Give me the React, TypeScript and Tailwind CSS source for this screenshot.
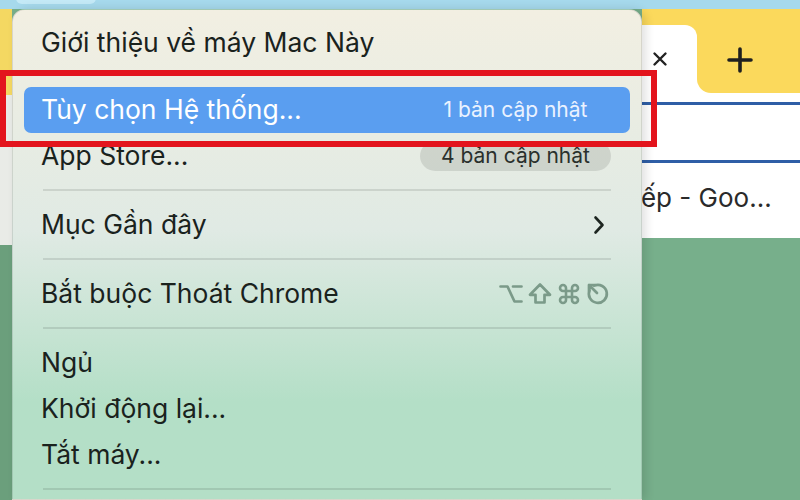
import { Command } from 'lucide-react';

const font = { fontFamily: 'Inter, "Noto Sans", sans-serif' };

function Row({ label, right, active }: { label: string; right?: React.ReactNode; active?: boolean }) {
  return (
    <div
      className={
        'mx-[11px] h-[46px] flex items-center justify-between rounded-[7px] pl-[17px] pr-[19px] text-[26.5px] ' +
        (active ? 'bg-[#5a9ef0] text-white' : 'text-[#1a221d]')
      }
    >
      <span>{label}</span>
      {right}
    </div>
  );
}

function Sep({ h = 'h-[23px]', top = 'pt-[10px]' }: { h?: string; top?: string }) {
  return (
    <div className={h + ' ' + top + ' flex flex-col justify-start px-[30px]'}>
      <div className="h-[2px] bg-black/10" />
    </div>
  );
}

function Badge({ text, active }: { text: string; active?: boolean }) {
  return (
    <div
      className={
        'h-[30px] w-[191px] rounded-full flex items-center justify-center text-[21px] ' +
        (active ? 'text-[#eaf2ff]' : 'bg-black/10 text-[#2a302c]')
      }
    >
      {text}
    </div>
  );
}

function Shortcut() {
  const s = { fill: 'none', stroke: '#7b9a89', strokeWidth: 2.7, strokeLinecap: 'round' as const, strokeLinejoin: 'round' as const };
  return (
    <div className="flex items-center gap-[5px] mr-[1px]">
      <svg width="24" height="24" viewBox="0 0 24 24">
        <path d="M1.5 4.5h7l7 15h7M14 4.5h8.5" {...s} />
      </svg>
      <svg width="24" height="24" viewBox="0 0 24 24">
        <path d="M12 2.5 2 12.8h5.5v7.7h9v-7.7H22Z" {...s} />
      </svg>
      <Command size={24} color="#7b9a89" strokeWidth={2.6} />
      <svg width="24" height="24" viewBox="0 0 24 24">
        <path d="M8.2 3.6A9 9 0 1 1 3.6 8.2" {...s} />
        <path d="M3 3l8 8M3 3v6M3 3h6" {...s} />
      </svg>
    </div>
  );
}

export default function App() {
  return (
    <div className="relative w-[800px] h-[500px] overflow-hidden bg-[#77af8b]" style={font}>
      {/* top strip */}
      <div className="h-[9px] bg-[#a6d9ec] relative">
        <div className="absolute left-[16px] top-[-8px] w-[80px] h-[12px] rounded-[6px] bg-[#c4e9f6]" />
      </div>
      <div className="flex h-[491px]">
        {/* left edge of window behind */}
        <div className="w-[12px] flex flex-col">
          <div className="h-[86px] bg-[#f4d862]" />
          <div className="h-[150px] bg-[#e9ebe7]" />
          <div className="flex-1 bg-[#6b9f7c]" />
        </div>

        {/* menu */}
        <div className="relative z-10 w-[630px] rounded-t-[13px] border border-black/10 bg-linear-to-b from-[#f2efe2] via-[#e0eae4] via-45% to-[#b4dfc7] to-80% pt-[10px] shadow-[4px_0_10px_rgba(0,0,0,0.12)]">
          <Row label="Giới thiệu về máy Mac Này" />
          <Sep h="h-[21px]" top="pt-[5px]" />
          <Row label="Tùy chọn Hệ thống..." active right={<Badge text="1 bản cập nhật" active />} />
          <Row label="App Store..." right={<Badge text="4 bản cập nhật" />} />
          <Sep />
          <Row
            label="Mục Gần đây"
            right={
              <svg width="12" height="20" viewBox="0 0 12 20" className="mr-[6px]">
                <path d="M2.5 2.5 9.5 10l-7 7.5" fill="none" stroke="#1d2520" strokeWidth="2.6" strokeLinecap="round" strokeLinejoin="round" />
              </svg>
            }
          />
          <Sep />
          <Row label="Bắt buộc Thoát Chrome" right={<Shortcut />} />
          <Sep />
          <Row label="Ngủ" />
          <Row label="Khởi động lại..." />
          <Row label="Tắt máy..." />
          <Sep />
        </div>

        {/* browser window on the right */}
        <div className="flex-1 flex flex-col">
          <div className="h-[84px] bg-[#fbd95c] flex items-end">
            <div className="w-[55px] h-[68px] bg-white rounded-tr-[12px] flex items-center pl-[10px]">
              <svg width="16" height="16" viewBox="0 0 16 16">
                <path d="M2.5 2.5l11 11M13.5 2.5l-11 11" stroke="#222" strokeWidth="2.4" strokeLinecap="round" />
              </svg>
            </div>
            <div className="flex-1 h-full bg-white">
              <div className="h-full bg-[#fbd95c] rounded-bl-[14px] flex items-center justify-center pt-[18px] pr-[18px]">
                <svg width="26" height="26" viewBox="0 0 26 26">
                  <path d="M13 2v22M2 13h22" stroke="#1f1f1f" strokeWidth="3.6" strokeLinecap="round" />
                </svg>
              </div>
            </div>
          </div>
          <div className="h-[9px] bg-white" />
          <div className="h-[3px] bg-[#2e5ea6]" />
          <div className="h-[55px] bg-white" />
          <div className="h-[3px] bg-[#2e5ea6]" />
          <div className="h-[75px] bg-white flex items-center pb-[6px]">
            <span className="ml-[-17px] text-[26px] text-[#2a2a2a] whitespace-nowrap">bếp - Goo...</span>
          </div>
          <div className="flex-1" />
        </div>
      </div>

      {/* red annotation box */}
      <div className="absolute left-0 top-[70px] w-[657px] h-[77px] border-[6px] border-[#e3141d] z-20" />
    </div>
  );
}
